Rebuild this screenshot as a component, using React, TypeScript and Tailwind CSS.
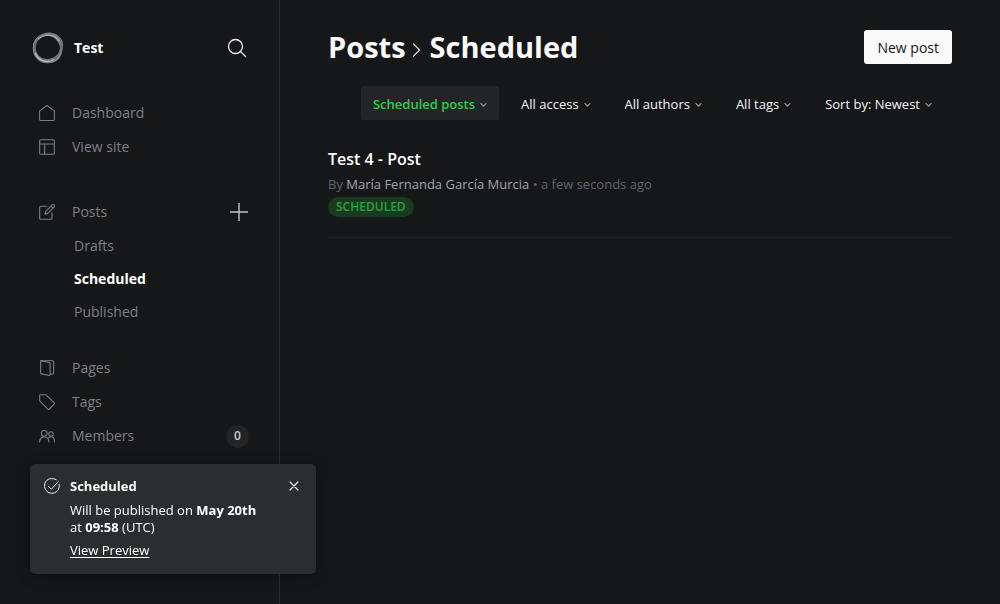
import type { ReactNode } from "react";

type FilterProps = { label: string; options: string[]; active?: boolean };

function Filter({ label, options, active = false }: FilterProps) {
  return (
    <div className={active ? "grid items-center rounded-xs bg-[#222428]" : "grid items-center"}>
      <select
        aria-label={label}
        className={
          active
            ? "field-sizing-content col-start-1 row-start-1 h-[34px] cursor-pointer appearance-none bg-transparent pt-[3px] pr-6 pl-3 text-[13px] font-semibold text-[#30cf43] outline-none"
            : "field-sizing-content col-start-1 row-start-1 h-[34px] cursor-pointer appearance-none bg-transparent pt-[3px] pr-6 pl-3 text-[13px] font-medium text-[#f4f5f6] outline-none"
        }
      >
        {options.map((option) => (
          <option key={option}>{option}</option>
        ))}
      </select>
      <svg
        viewBox="0 0 8 6"
        className="pointer-events-none col-start-1 row-start-1 mt-1 mr-3 h-[6px] w-[7px] justify-self-end fill-none stroke-[#8e9092]"
        aria-hidden="true"
      >
        <path d="M1 1.2 4 4.4 7 1.2" strokeWidth="1.4" strokeLinecap="round" strokeLinejoin="round" />
      </svg>
    </div>
  );
}

function Icon({ children }: { children: ReactNode }) {
  return (
    <svg
      viewBox="0 0 24 24"
      className="size-4 shrink-0 fill-none stroke-[#7c8086]"
      strokeWidth="1.6"
      strokeLinecap="round"
      strokeLinejoin="round"
      aria-hidden="true"
    >
      {children}
    </svg>
  );
}

function NavLink({ icon, children }: { icon: ReactNode; children: ReactNode }) {
  return (
    <a href="#" className="flex h-[34px] flex-1 items-center gap-[17px] pl-[7px] text-[#7c8187]">
      <Icon>{icon}</Icon>
      <span className="pb-0.5">{children}</span>
    </a>
  );
}

function SubLink({ active = false, children }: { active?: boolean; children: ReactNode }) {
  return (
    <a
      href="#"
      className={
        active
          ? "flex h-[33px] items-center font-bold text-white"
          : "flex h-[33px] items-center text-[#7c8187]"
      }
    >
      {children}
    </a>
  );
}

function Sidebar() {
  return (
    <aside className="w-[280px] shrink-0 border-r border-[#2b2d31] px-8 pt-8">
      <div className="flex h-8 items-center">
        <svg viewBox="0 0 32 32" className="size-8 fill-none" aria-hidden="true">
          <circle cx="15.6" cy="16.4" r="13.8" stroke="#8b8c8d" strokeWidth="2.2" />
          <ellipse cx="16.8" cy="15.2" rx="13.8" ry="12.8" stroke="#6b6d6e" strokeWidth="2.2" transform="rotate(-35 16 16)" />
          <ellipse cx="16" cy="16.6" rx="14.6" ry="12.8" stroke="#8d8e8f" strokeWidth="1.3" transform="rotate(50 16 16)" />
          <ellipse cx="15.4" cy="16" rx="13.2" ry="14.6" stroke="#737475" strokeWidth="1.4" transform="rotate(18 16 16)" />
          <path d="M3 21C6 28 14 32 22 27.5" stroke="#bcbdbe" strokeWidth="1.4" />
          <path d="M6 7.5C12 1.5 23 1.5 27.5 9" stroke="#a3a4a5" strokeWidth="1.4" />
          <path d="M17 1.5C24 1 31 7 30.5 14" stroke="#77797a" strokeWidth="1.3" />
        </svg>
        <span className="ml-[10px] flex-1 pb-0.5 text-[14px] font-bold text-white">Test</span>
        <button type="button" aria-label="Search" className="flex size-5 items-center justify-center">
          <svg viewBox="0 0 20 20" className="size-5 fill-none stroke-[#f0f1f2]" strokeWidth="1.3" strokeLinecap="round" aria-hidden="true">
            <circle cx="8.5" cy="8.5" r="7" />
            <path d="m13.5 13.5 5 5" />
          </svg>
        </button>
      </div>

      <nav className="mt-8 text-[14px]" aria-label="Main">
        <NavLink icon={<path d="M12 .8.9 8.8v12.6c0 1 .8 1.8 1.8 1.8h18.6c1 0 1.8-.8 1.8-1.8V8.8Z" />}>
          Dashboard
        </NavLink>
        <NavLink
          icon={
            <>
              <rect x="1" y="1" width="22" height="22" rx="1.8" />
              <path d="M1 7.5h22M8.5 7.5V23" />
            </>
          }
        >
          View site
        </NavLink>

        <div className="mt-[31px] flex items-center">
          <NavLink
            icon={
              <>
                <path d="M12 3.5H2.5C1.6 3.5 1 4.2 1 5v16.5c0 .9.7 1.5 1.5 1.5H18c.9 0 1.5-.7 1.5-1.5V13" />
                <path d="m9 15.5 1-4.5L19.7 1.4a2 2 0 0 1 3 0c.8.8.8 2.1 0 2.9L13.3 14Zm9-12.3 3 3" />
              </>
            }
          >
            Posts
          </NavLink>
          <button type="button" aria-label="New post" className="-mr-px flex size-[18px] items-center justify-center">
            <svg viewBox="0 0 18 18" className="size-[18px] fill-none stroke-[#c3c5c7]" strokeWidth="1.4" aria-hidden="true">
              <path d="M9 0v18M0 9h18" />
            </svg>
          </button>
        </div>
        <div className="pl-[42px]">
          <SubLink>Drafts</SubLink>
          <SubLink active>Scheduled</SubLink>
          <SubLink>Published</SubLink>
        </div>

        <div className="mt-[23px]">
          <NavLink
            icon={
              <>
                <path d="M3 1h17.5c.9 0 1.5.6 1.5 1.5v17c0 .9-.6 1.5-1.5 1.5H17" />
                <path d="m3 1 12.5 2.8c.7.2 1.2.8 1.2 1.5v16.5c0 .9-.7 1.5-1.5 1.3L3.8 20.8c-.7-.1-1.3-.8-1.3-1.5V1.5c0-.3.2-.5.5-.5Z" />
              </>
            }
          >
            Pages
          </NavLink>
          <NavLink
            icon={
              <path d="M1 1.9v7.6c0 .6.2 1.1.6 1.5l11.3 11.5c.8.8 2 .8 2.8 0l6.8-6.8c.8-.8.8-2 0-2.8L11 1.6c-.4-.4-.9-.6-1.5-.6H1.9c-.5 0-.9.4-.9.9Z" />
            }
          >
            Tags
          </NavLink>
          <div className="flex items-center">
            <NavLink
              icon={
                <>
                  <circle cx="7.8" cy="8" r="4.3" />
                  <circle cx="18" cy="9" r="3.3" />
                  <path d="M.9 21c0-4.5 3-7.5 6.9-7.5s6.9 3 6.9 7.5M14.5 14.5c1-1 2.2-1.5 3.5-1.5 3 0 5.1 2.8 5.1 6.5V21" />
                </>
              }
            >
              Members
            </NavLink>
            <span className="-mr-0.5 flex size-[23px] items-center justify-center rounded-full bg-[#222428] text-xs font-semibold text-[#c8cdd2]">
              0
            </span>
          </div>
        </div>
      </nav>
    </aside>
  );
}

function Toast() {
  return (
    <div
      role="status"
      className="fixed bottom-[30px] left-[30px] flex w-[286px] items-start rounded-[5px] bg-[#2b2d31] px-[14px] pt-[13px] pb-[15px] text-[13px] text-white shadow-[0_2px_14px_rgba(0,0,0,0.3)]"
    >
      <svg viewBox="0 0 24 24" className="mt-px size-4 shrink-0 fill-none stroke-[#f0f1f2]" strokeWidth="1.5" strokeLinecap="round" strokeLinejoin="round" aria-hidden="true">
        <path d="M22.8 9.5A11.2 11.2 0 1 1 18.5 2.8" />
        <path d="m6.5 12.5 4.5 4.3L21.5 5.5" />
      </svg>
      <div className="ml-[10px] flex-1">
        <p className="leading-[18px] font-bold">Scheduled</p>
        <p className="mt-[7px] leading-[17px]">
          Will be published on <b>May 20th</b>
          <br />
          at <b>09:58</b> (UTC)
        </p>
        <a href="#" className="mt-[5px] block leading-[18px] underline underline-offset-2">
          View Preview
        </a>
      </div>
      <button type="button" aria-label="Close" className="mt-1 mr-[3px] flex size-[10px] items-center justify-center">
        <svg viewBox="0 0 10 10" className="size-[10px] stroke-[#f0f1f2]" strokeWidth="1.2" strokeLinecap="round" aria-hidden="true">
          <path d="m1 1 8 8M9 1 1 9" />
        </svg>
      </button>
    </div>
  );
}

export default function App() {
  return (
    <div className="flex min-h-screen bg-[#151719] font-['Open_Sans','Noto_Sans',sans-serif]">
      <Sidebar />
      <main className="min-w-0 flex-1 px-12 pt-[30px]">
        <header className="flex items-center justify-between">
          <h1 className="flex h-[34px] items-center text-[29px] font-bold text-[#fafafa]">
            <a href="#">Posts</a>
            <svg viewBox="0 0 8 14" className="mt-[5px] mr-[9px] ml-[6px] h-[14px] w-[9px] fill-none stroke-[#e2e3e4]" strokeWidth="1.2" strokeLinecap="round" strokeLinejoin="round" aria-hidden="true">
              <path d="m1 .8 6 6.2-6 6.2" />
            </svg>
            Scheduled
          </h1>
          <button type="button" className="h-[34px] rounded-[3px] bg-[#fafafa] px-[13px] text-[14px] text-[#15171a]">
            New post
          </button>
        </header>

        <div className="mt-[22px] flex justify-end gap-[10px] pr-2">
          <Filter label="Post type" active options={["Scheduled posts"]} />
          <Filter label="Access" options={["All access"]} />
          <Filter label="Author" options={["All authors"]} />
          <Filter label="Tag" options={["All tags"]} />
          <Filter label="Sort order" options={["Sort by: Newest"]} />
        </div>

        <ul className="mt-7">
          <li className="border-b border-[#1e2023] pb-5">
            <h2 className="text-base leading-[22px] font-semibold text-white">
              <a href="#">Test 4 - Post</a>
            </h2>
            <p className="mt-1 text-[13px] leading-[20px] text-[#5d6670]">
              By <span className="font-medium text-[#a0a6ad]">María Fernanda García Murcia</span> • a few seconds ago
            </p>
            <span className="mt-[3px] flex h-5 w-fit items-center rounded-full bg-[#1a3a20] px-2 text-xs font-semibold text-[#27a438]">
              SCHEDULED
            </span>
          </li>
        </ul>
      </main>
      <Toast />
    </div>
  );
}
